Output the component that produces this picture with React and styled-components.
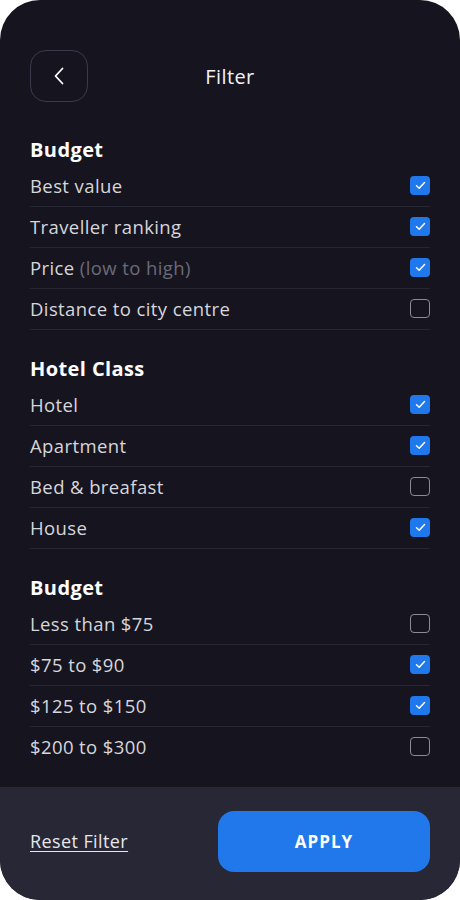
import React from 'react';
import styled, { createGlobalStyle } from 'styled-components';

const GlobalStyle = createGlobalStyle`
  html, body {
    margin: 0;
    padding: 0;
    background: #ffffff;
  }
  * {
    box-sizing: border-box;
  }
`;

const Screen = styled.div`
  width: 460px;
  height: 900px;
  background: #16151f;
  border-radius: 40px;
  overflow: hidden;
  display: flex;
  flex-direction: column;
  font-family: "Open Sans", "Liberation Sans", sans-serif;
  color: #ffffff;
`;

const Header = styled.header`
  display: grid;
  grid-template-columns: 58px 1fr 58px;
  align-items: center;
  padding: 50px 30px 0;
`;

const BackButton = styled.button`
  width: 58px;
  height: 52px;
  border-radius: 16px;
  border: 1.5px solid #3b3a4c;
  background: transparent;
  display: flex;
  align-items: center;
  justify-content: center;
  padding: 0;
  cursor: pointer;
`;

const Title = styled.h1`
  margin: 0;
  text-align: center;
  font-size: 20px;
  font-weight: 500;
  letter-spacing: 0.4px;
  color: #f2f2f5;
`;

const Content = styled.main`
  flex: 1;
  padding: 0 30px;
`;

const Section = styled.section`
  padding-top: ${(p) => (p.$first ? '37px' : '28px')};
`;

const SectionTitle = styled.h2`
  margin: 0 0 5px;
  font-size: 20px;
  line-height: 22px;
  font-weight: 700;
  letter-spacing: 0.4px;
  color: #ffffff;
`;

const Row = styled.label`
  display: flex;
  align-items: center;
  justify-content: space-between;
  height: 41px;
  padding-bottom: 1px;
  border-bottom: 1px solid ${(p) => (p.$last ? 'transparent' : '#272633')};
  cursor: pointer;
`;

const RowText = styled.span`
  font-size: 18.5px;
  letter-spacing: 0.4px;
  color: #d6d6dc;
`;

const Muted = styled.span`
  color: #6b6a78;
`;

const Box = styled.span`
  width: 20px;
  height: 19px;
  border-radius: 4px;
  display: flex;
  align-items: center;
  justify-content: center;
  background: ${(p) => (p.$checked ? '#1f78ec' : 'transparent')};
  border: ${(p) => (p.$checked ? 'none' : '1.5px solid #8b8a96')};
`;

const Footer = styled.footer`
  height: 113px;
  background: #272735;
  display: flex;
  align-items: flex-start;
  justify-content: space-between;
  padding: 24px 30px 0;
`;

const ResetLink = styled.a`
  margin-top: 18px;
  font-size: 18px;
  letter-spacing: 0.4px;
  color: #e6e6ec;
  text-decoration: underline;
  text-underline-offset: 3px;
  cursor: pointer;
`;

const ApplyButton = styled.button`
  width: 212px;
  height: 61px;
  border: none;
  border-radius: 16px;
  background: #2178ea;
  color: #ffffff;
  font-family: inherit;
  font-size: 17px;
  font-weight: 700;
  letter-spacing: 1px;
  cursor: pointer;
`;

const sections = [
  {
    title: 'Budget',
    items: [
      { label: 'Best value', checked: true },
      { label: 'Traveller ranking', checked: true },
      { label: 'Price', note: '(low to high)', checked: true },
      { label: 'Distance to city centre', checked: false },
    ],
  },
  {
    title: 'Hotel Class',
    items: [
      { label: 'Hotel', checked: true },
      { label: 'Apartment', checked: true },
      { label: 'Bed & breafast', checked: false },
      { label: 'House', checked: true },
    ],
  },
  {
    title: 'Budget',
    items: [
      { label: 'Less than $75', checked: false },
      { label: '$75 to $90', checked: true },
      { label: '$125 to $150', checked: true },
      { label: '$200 to $300', checked: false },
    ],
  },
];

function Checkbox({ checked }) {
  return (
    <Box $checked={checked}>
      {checked && (
        <svg width="11" height="9" viewBox="0 0 11 9" fill="none">
          <path d="M1.5 4.8L4.2 7.3L9.5 1.6" stroke="#fff" strokeWidth="1.5" strokeLinecap="round" strokeLinejoin="round" />
        </svg>
      )}
    </Box>
  );
}

export default function App() {
  return (
    <>
      <GlobalStyle />
      <Screen>
        <Header>
          <BackButton aria-label="Back">
            <svg width="12" height="18" viewBox="0 0 12 18" fill="none">
              <path d="M9.5 1.5L2.5 9L9.5 16.5" stroke="#fff" strokeWidth="1.8" strokeLinecap="round" strokeLinejoin="round" />
            </svg>
          </BackButton>
          <Title>Filter</Title>
          <span />
        </Header>

        <Content>
          {sections.map((section, si) => (
            <Section key={si} $first={si === 0}>
              <SectionTitle>{section.title}</SectionTitle>
              {section.items.map((item, i) => (
                <Row key={item.label} $last={si === sections.length - 1 && i === section.items.length - 1}>
                  <RowText>
                    {item.label}
                    {item.note && <Muted> {item.note}</Muted>}
                  </RowText>
                  <Checkbox checked={item.checked} />
                </Row>
              ))}
            </Section>
          ))}
        </Content>

        <Footer>
          <ResetLink>Reset Filter</ResetLink>
          <ApplyButton>APPLY</ApplyButton>
        </Footer>
      </Screen>
    </>
  );
}
